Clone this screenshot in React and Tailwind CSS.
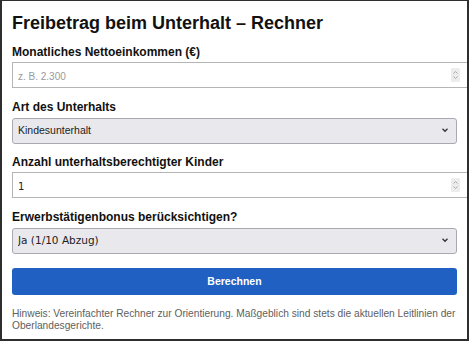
import React from "react";

const Spinner = () => (
  <svg width="9" height="14" viewBox="0 0 9 14" className="absolute right-[4px] top-1/2 -translate-y-1/2">
    <rect x="0" y="0" width="9" height="14" rx="1.5" fill="#ececec" />
    <path d="M2.5 5.5 L4.5 3.5 L6.5 5.5" fill="none" stroke="#a3a3a3" strokeWidth="0.9" />
    <path d="M2.5 8.5 L4.5 10.5 L6.5 8.5" fill="none" stroke="#a3a3a3" strokeWidth="0.9" />
  </svg>
);

const Chevron = () => (
  <svg width="8" height="6" viewBox="0 0 8 6" className="absolute right-[8px] top-1/2 -translate-y-1/2 pointer-events-none">
    <path d="M1.5 1.8 L4 4.3 L6.5 1.8" fill="none" stroke="#333" strokeWidth="1.3" />
  </svg>
);

function Label({ children }) {
  return (
    <label className="block text-[12px] leading-[14px] font-bold text-[#111] mb-[3px]">{children}</label>
  );
}

function NumberField({ value, placeholder }) {
  return (
    <div className="relative h-[26px] w-[calc(100%+14px)] border border-[#b5b5b5] bg-white mb-[12px]">
      <input
        type="text"
        defaultValue={value}
        placeholder={placeholder}
        className="w-full h-full px-[5px] text-[10px] text-[#222] placeholder:text-[#9a9a9a] outline-none"
        style={{ fontFamily: value ? '"DejaVu Sans", sans-serif' : '"Liberation Sans", Arial, sans-serif' }}
      />
      <div className="absolute right-[6px] top-0 h-full w-[14px]">
        <Spinner />
      </div>
    </div>
  );
}

function SelectField({ value, dejavu }) {
  return (
    <div className="relative h-[26px] w-full mb-[12px]">
      <select
        defaultValue={value}
        className={
          "appearance-none w-full h-full rounded-[3px] border border-[#a9a9b3] bg-[#e9e9ed] px-[5px] text-[#222] outline-none " +
          (dejavu ? "text-[10.5px] font-['DejaVu_Sans',sans-serif]" : "text-[10.5px] font-['Liberation_Sans',Arial,sans-serif]")
        }
      >
        <option>{value}</option>
      </select>
      <Chevron />
    </div>
  );
}

export default function App() {
  return (
    <div className="w-[469px] h-[341px] overflow-hidden bg-white border-2 border-t-[1.5px] border-[#2e2e2e] px-[10px] pt-[12px] font-['Liberation_Sans',Arial,sans-serif]">
      <h1 className="text-[18px] leading-[21px] font-bold text-[#111] mb-[11px]">Freibetrag beim Unterhalt – Rechner</h1>

      <Label>Monatliches Nettoeinkommen (€)</Label>
      <NumberField placeholder="z. B. 2.300" />

      <Label>Art des Unterhalts</Label>
      <SelectField value="Kindesunterhalt" />

      <Label>Anzahl unterhaltsberechtigter Kinder</Label>
      <NumberField value="1" />

      <Label>Erwerbstätigenbonus berücksichtigen?</Label>
      <SelectField value="Ja (1/10 Abzug)" dejavu />

      <button className="mt-[3px] w-full h-[27px] rounded-[3px] bg-[#1f60c2] text-white text-[10.5px] font-bold">
        Berechnen
      </button>

      <p className="mt-[13px] text-[10.2px] leading-[12px] text-[#606060]">
        Hinweis: Vereinfachter Rechner zur Orientierung. Maßgeblich sind stets die aktuellen Leitlinien der Oberlandesgerichte.
      </p>
    </div>
  );
}
